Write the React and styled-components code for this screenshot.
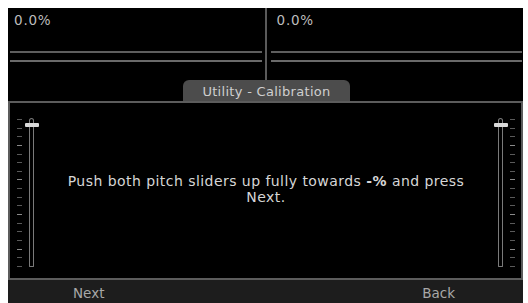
import styled, { createGlobalStyle } from 'styled-components'

const Global = createGlobalStyle`
  html, body { margin: 0; padding: 0; background: #fff; }
  body { font-family: 'DejaVu Sans', 'Liberation Sans', sans-serif; }
`

const Screen = styled.div`
  margin: 8px 5px 0 8px;
  width: 515px;
  height: 295px;
  background: #000;
  display: flex;
  flex-direction: column;
`

const TopRow = styled.div`
  display: flex;
  height: 72px;
`

const Meter = styled.div`
  flex: 1;
  display: flex;
  flex-direction: column;
  padding: ${props => props.pad || '0 2px 0 2px'};
`

const MeterValue = styled.div`
  color: #bdbdbd;
  font-size: 13.5px;
  line-height: 15px;
  letter-spacing: 0.8px;
  padding: 5px 0 0 ${props => props.indent || '4px'};
  height: 39px;
  box-sizing: border-box;
  margin-bottom: 4px;
`

const MeterBar = styled.div`
  height: 7px;
  border-top: 2px solid #5e5e5e;
  border-bottom: 2px solid #6a6a6a;
`

const Divider = styled.div`
  width: 2px;
  background: #5a5a5a;
`

const TabRow = styled.div`
  height: 21px;
  display: flex;
  align-items: flex-end;
  padding-left: 175px;
`

const Tab = styled.div`
  width: 167px;
  height: 21px;
  background: #4c4c4c;
  border-radius: 6px 6px 0 0;
  color: #cfcfcf;
  font-size: 13px;
  line-height: 24px;
  text-align: center;
  letter-spacing: 0.3px;
`

const Panel = styled.div`
  height: 175px;
  border: 2px solid #5c5c5c;
  display: flex;
  align-items: stretch;
`

const SliderGroup = styled.div`
  display: flex;
  flex-direction: ${props => props.right ? 'row-reverse' : 'row'};
  padding: ${props => props.right ? '0 6px 0 0' : '0 0 0 7px'};
  gap: 7px;
`

const Ticks = styled.div`
  display: flex;
  flex-direction: column;
  justify-content: space-between;
  margin-top: 16px;
  height: 148px;
`

const Tick = styled.div`
  width: 5px;
  height: 1px;
  background: ${props => props.major ? '#8a8a8a' : '#5a5a5a'};
`

const Track = styled.div`
  position: relative;
  width: 5px;
  margin-top: 15px;
  height: 149px;
  border: 1px solid #7a7a7a;
  border-radius: 3px 3px 1px 1px;
  box-sizing: border-box;
`

const Handle = styled.div`
  position: absolute;
  top: 4px;
  left: -5px;
  width: 14px;
  height: 4px;
  background: #d9d9d9;
  border-radius: 1px;
`

const Message = styled.div`
  flex: 1;
  display: flex;
  align-items: center;
  justify-content: center;
  text-align: center;
  color: #d6d6d6;
  font-size: 14px;
  line-height: 16px;
  letter-spacing: 0.45px;
  padding: 0 0 4px 0;
  white-space: nowrap;
`

const Footer = styled.div`
  flex: 1;
  background: #1d1d1d;
  display: flex;
  justify-content: space-between;
  align-items: center;
  padding: 3px 68px 0 65px;
  color: #a8a8a8;
  font-size: 13.5px;
`

const Slider = ({ right }) => {
  const ticks = Array.from({ length: 18 })
  return (
    <SliderGroup right={right}>
      <Ticks>
        {ticks.map((_, i) => <Tick key={i} major={i % 4 === 3} />)}
      </Ticks>
      <Track>
        <Handle />
      </Track>
    </SliderGroup>
  )
}

export default function App() {
  return (
    <>
      <Global />
      <Screen>
        <TopRow>
          <Meter pad="0 3px 0 2px">
            <MeterValue>0.0%</MeterValue>
            <MeterBar />
          </Meter>
          <Divider />
          <Meter pad="0 1px 0 4px">
            <MeterValue indent="6px">0.0%</MeterValue>
            <MeterBar />
          </Meter>
        </TopRow>
        <TabRow>
          <Tab>Utility - Calibration</Tab>
        </TabRow>
        <Panel>
          <Slider />
          <Message>
            <span>
              Push both pitch sliders up fully towards <b>-%</b> and press
              <br />
              Next.
            </span>
          </Message>
          <Slider right />
        </Panel>
        <Footer>
          <span>Next</span>
          <span>Back</span>
        </Footer>
      </Screen>
    </>
  )
}
